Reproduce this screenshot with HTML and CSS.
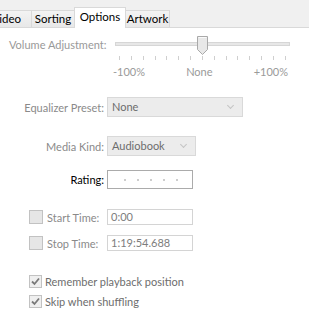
FILE: index.html
```html
<!DOCTYPE html>
<html>
  <head>
    <title>Options</title>
    <link rel="stylesheet" href="styles.css">
  </head>
  <body>
    <div class="tabs">
      <div class="tab first">Video</div>
      <div class="tab sorting">Sorting</div>
      <div class="tab active">Options</div>
      <div class="tab artwork">Artwork</div>
    </div>
    <main class="page">
      <div class="volume-row">
        <span class="volume-label">Volume Adjustment:</span>
        <div class="slider">
          <div class="track"></div>
          <svg class="thumb" width="11" height="19" viewBox="0 0 11 19">
            <path d="M0.5 0.5 H10.5 V13.5 L5.5 18.5 L0.5 13.5 Z" fill="#e8e8e8" stroke="#a9a9a9"/>
            <path d="M1.5 1.5 H9.5" stroke="#fafafa"/>
          </svg>
          <div class="ticks">
            <i></i><i></i><i></i><i></i><i></i><i></i><i></i><i></i>
            <i></i><i></i><i></i><i></i><i></i><i></i><i></i>
          </div>
          <div class="scale">
            <span>-100%</span>
            <span>None</span>
            <span>+100%</span>
          </div>
        </div>
      </div>

      <div class="field eq-row">
        <span class="label">Equalizer Preset:</span>
        <div class="select wide">None<span class="chev"></span></div>
      </div>

      <div class="field kind-row">
        <span class="label">Media Kind:</span>
        <div class="select narrow">Audiobook<span class="chev"></span></div>
      </div>

      <div class="field rating-row">
        <span class="label dark">Rating:</span>
        <div class="rating">
          <i></i><i></i><i></i><i></i><i></i>
        </div>
      </div>

      <div class="time-row start-row">
        <span class="check"></span>
        <span class="time-label">Start Time:</span>
        <div class="box">0:00</div>
      </div>
      <div class="time-row stop-row">
        <span class="check"></span>
        <span class="time-label">Stop Time:</span>
        <div class="box">1:19:54.688</div>
      </div>

      <div class="check-row remember-row">
        <span class="check checked">
          <svg width="11" height="11" viewBox="0 0 11 11"><path d="M2 5.5 L4.5 8 L9 2.5" fill="none" stroke="#7a7a7a" stroke-width="1.8"/></svg>
        </span>
        <span class="check-text">Remember playback position</span>
      </div>
      <div class="check-row skip-row">
        <span class="check checked">
          <svg width="11" height="11" viewBox="0 0 11 11"><path d="M2 5.5 L4.5 8 L9 2.5" fill="none" stroke="#7a7a7a" stroke-width="1.8"/></svg>
        </span>
        <span class="check-text">Skip when shuffling</span>
      </div>
    </main>
  </body>
</html>
```

FILE: styles.css
```css
body {
  margin: 0;
  font-family: Lato, "Liberation Sans", sans-serif;
  font-size: 11px;
  background-color: #fff;
  color: #8a8a8a;
  width: 309px;
  height: 329px;
  overflow: hidden;
}

/* tab strip */
.tabs {
  display: flex;
  align-items: flex-end;
  height: 28px;
  background-color: #f0f0f0;
  border-bottom: 1px solid #d9d9d9;
  box-sizing: border-box;
}

.tab {
  box-sizing: border-box;
  height: 17px;
  line-height: 15px;
  border: 1px solid #d9d9d9;
  border-bottom: none;
  margin-left: -1px;
  background: linear-gradient(#f3f3f3, #e8e8e8);
  color: #000;
  font-size: 11.5px;
  text-align: center;
  white-space: nowrap;
}

.tab.first {
  width: 32px;
  margin-left: 0;
  border-left: none;
  overflow: hidden;
  text-align: right;
  padding-right: 10px;
  direction: rtl;
}

.tab.sorting { width: 44px; }
.tab.artwork { width: 45px; }

.tab.active {
  width: 52px;
  height: 21px;
  line-height: 18px;
  background: #fff;
  margin-bottom: -1px;
  position: relative;
}

.page {
  display: flex;
  flex-direction: column;
}

/* volume slider */
.volume-row {
  display: flex;
  margin-top: 9px;
}

.volume-label {
  width: 115px;
  padding-left: 9px;
  box-sizing: border-box;
  line-height: 15px;
  white-space: nowrap;
  color: #999;
}

.slider {
  position: relative;
  width: 175px;
  padding-top: 5px;
}

.track {
  height: 2px;
  border: 1px solid #d6d6d6;
  background-color: #e7e7e7;
}

.thumb {
  position: absolute;
  left: 82px;
  top: -1px;
}

.ticks {
  display: flex;
  justify-content: space-between;
  margin: 10px 4px 0 4px;
}

.ticks i {
  width: 1px;
  height: 4px;
  background-color: #cfcfcf;
}

.scale {
  display: flex;
  justify-content: space-between;
  margin: 5px 2px 0 -2px;
  line-height: 14px;
  color: #9a9a9a;
}

/* labelled fields */
.field {
  display: flex;
  align-items: center;
}

.label {
  width: 107px;
  text-align: right;
  padding-right: 3px;
  box-sizing: border-box;
  white-space: nowrap;
}

.label.dark {
  color: #000;
}

.eq-row { margin-top: 18px; }
.kind-row { margin-top: 19px; }
.rating-row { margin-top: 14px; }

.select {
  position: relative;
  box-sizing: border-box;
  height: 20px;
  line-height: 18px;
  padding-left: 4px;
  border: 1px solid #d9d9d9;
  background-color: #ececec;
  color: #6d6d6d;
}

.select.wide { width: 136px; }
.select.narrow { width: 89px; }

.chev {
  position: absolute;
  right: 9px;
  top: 5px;
  width: 4px;
  height: 4px;
  border-right: 1px solid #c4c4c4;
  border-bottom: 1px solid #c4c4c4;
  transform: rotate(45deg);
}

.rating {
  box-sizing: border-box;
  display: flex;
  align-items: center;
  gap: 11px;
  width: 86px;
  height: 19px;
  padding-left: 16px;
  border: 1px solid #ababab;
}

.rating i {
  width: 2px;
  height: 2px;
  background-color: #cdcdcd;
}

/* start / stop */
.time-row {
  display: flex;
  align-items: center;
  padding-left: 29px;
}

.start-row { margin-top: 20px; }
.stop-row { margin-top: 10px; }

.check {
  box-sizing: border-box;
  width: 14px;
  height: 14px;
  border: 1px solid #c2c2c2;
  background-color: #e6e6e6;
  display: flex;
  align-items: center;
  justify-content: center;
  flex-shrink: 0;
}

.check.checked {
  width: 13px;
  height: 13px;
  background-color: #efefef;
}

.time-label {
  width: 64px;
  padding-left: 4px;
  box-sizing: border-box;
  white-space: nowrap;
}

.box {
  box-sizing: border-box;
  width: 86px;
  height: 16px;
  line-height: 14px;
  padding: 0 3px;
  border: 1px solid #d4d4d4;
  color: #7d7d7d;
}

/* checkboxes */
.check-row {
  display: flex;
  align-items: center;
  padding-left: 29px;
  height: 14px;
}

.remember-row { margin-top: 23px; }
.skip-row { margin-top: 6px; }

.check-text {
  padding-left: 3px;
  color: #6d6d6d;
  white-space: nowrap;
}
```
